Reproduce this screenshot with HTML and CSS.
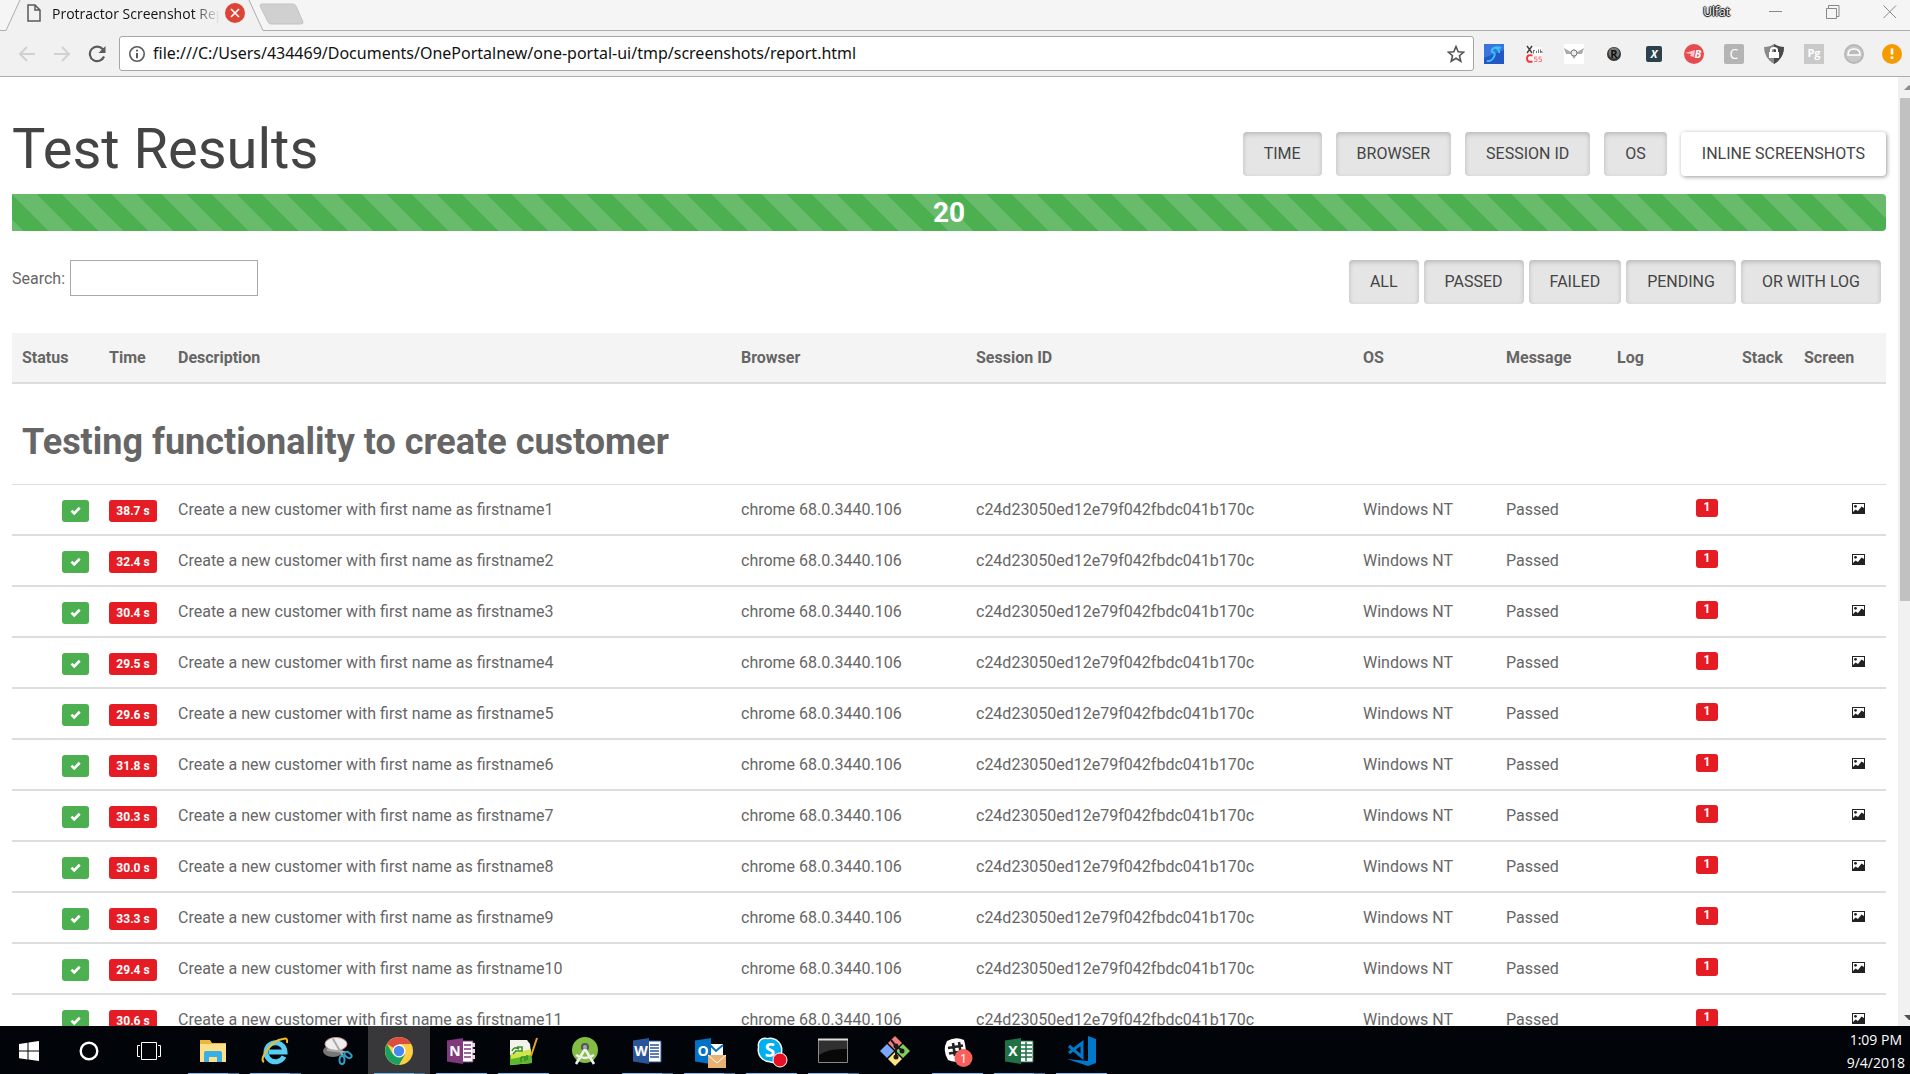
FILE: index.html
```html
<!DOCTYPE html>
<html lang="en">
<head>
<meta charset="utf-8">
<title>Protractor Screenshot Report</title>
<link rel="stylesheet" href="styles.css">
</head>
<body>
<svg class="defs" aria-hidden="true">
  <symbol id="check" viewBox="0 0 12 10"><path d="M1 5.6 2.9 3.7 4.7 5.5 9.3.8 11.2 2.7 4.7 9.2z" fill="#fff"/></symbol>
  <symbol id="picture" viewBox="0 0 13 11"><path d="M0 0h13v11H0z" fill="#222"/><path d="M1 1h11v4L9.500 3.500 6 8 3.500 6.500 1 9z" fill="#fff"/><circle cx="3.500" cy="3.300" r="1.400" fill="#222"/></symbol>
</svg>

<header class="browser">
  <div class="tabstrip">
    <svg class="tabshape" viewBox="0 0 310 31" aria-hidden="true">
      <path d="M0 30.500H6L20 0H249L263 30.500V31H0z" fill="#f1f1f1"/>
      <path d="M0 30.500H6L20 0M249 0L263 30.500H310" fill="none" stroke="#adadad"/>
      <path d="M262 4H293Q295 4 296 6L303 22Q303 24 301 24H271Q269 24 268 22L260 6Q260 4 262 4z" fill="#d0d0d0" stroke="#c3c3c3"/>
    </svg>
    <div class="tab">
      <svg width="14" height="18" viewBox="0 0 14 18"><path d="M1 1H8L13 6V17H1zM8 1V6H13" fill="none" stroke="#5a5a5a" stroke-width="1.500"/></svg>
      <span class="tabtitle">Protractor Screenshot Report</span>
      <button class="plain" aria-label="Close tab"><svg width="20" height="20" viewBox="0 0 20 20"><circle cx="10" cy="10" r="10" fill="#db4437"/><path d="M6 6 14 14M14 6 6 14" stroke="#fff" stroke-width="1.600"/></svg></button>
    </div>
    <div class="winctl">
      <span class="user">Ulfat</span>
      <button class="plain" aria-label="Minimize"><svg width="14" height="14" viewBox="0 0 14 14"><path d="M0 6.500H13" stroke="#888"/></svg></button>
      <button class="plain" aria-label="Restore"><svg width="14" height="14" viewBox="0 0 14 14"><path d="M.5 3.500H10.500V13.500H.5zM2.500 3V.5H13V11.500H11" fill="none" stroke="#888"/></svg></button>
      <button class="plain" aria-label="Close"><svg width="14" height="14" viewBox="0 0 14 14"><path d="M.5.5 13 13M13 .5.5 13" stroke="#888"/></svg></button>
    </div>
  </div>
  <div class="toolbar">
    <div class="nav">
      <button class="plain" aria-label="Back"><svg width="18" height="18" viewBox="0 0 18 18"><path d="M17 9H2M9 2 2 9 9 16" fill="none" stroke="#d0d1d3" stroke-width="2"/></svg></button>
      <button class="plain" aria-label="Forward"><svg width="18" height="18" viewBox="0 0 18 18"><path d="M1 9H16M9 2 16 9 9 16" fill="none" stroke="#d0d1d3" stroke-width="2"/></svg></button>
      <button class="plain" aria-label="Reload"><svg width="18" height="18" viewBox="0 0 18 18"><path d="M14.800 4.200A7.300 7.300 0 1 0 16 11.500" fill="none" stroke="#5a5b5d" stroke-width="2.200"/><path d="M17.500 1V8H10.500z" fill="#5a5b5d"/></svg></button>
    </div>
    <div class="omnibox">
      <svg width="16" height="16" viewBox="0 0 16 16"><circle cx="8" cy="8" r="7.200" fill="none" stroke="#5a5a5a" stroke-width="1.600"/><path d="M7 3.700H9V5.600H7zM7 7H9V12.200H7z" fill="#5a5a5a"/></svg>
      <input class="url" aria-label="Address" value="file:///C:/Users/434469/Documents/OnePortalnew/one-portal-ui/tmp/screenshots/report.html">
      <button class="plain" aria-label="Bookmark"><svg width="18" height="18" viewBox="0 0 18 18"><path d="M9 1.500 11.200 6.700 16.700 7.100 12.500 10.700 13.800 16.200 9 13.200 4.200 16.200 5.500 10.700 1.300 7.100 6.800 6.700z" fill="none" stroke="#555" stroke-width="1.600"/></svg></button>
    </div>
    <div class="extensions">
      <svg viewBox="0 0 20 20"><path d="M0 0h20v20H0z" fill="#2456c4"/><path d="M0 0h20v6L0 14z" fill="#3a74dc"/><path d="M17 4C12 2 7 4 8 8 14 8 9 18 3 17M12 4Q16 6 15 9" fill="none" stroke="#35c4f5" stroke-width="2"/></svg>
      <svg viewBox="0 0 20 20"><path d="M2 3h16v15H2z" fill="#fafafa"/><path d="M3 2 8 9M8 2 3 9" stroke="#444" stroke-width="1.500"/><path d="M9.500 6V9.500M9.500 6.500H11M12.500 7V9M14.500 5.500V9M16.500 5.500V9M16.500 7.500H18V9" fill="none" stroke="#777"/><path d="M8.500 11.500Q3 10 3 14.500T8.500 17.500" fill="none" stroke="#f33" stroke-width="2"/><path d="M13 13H10.500V15H13V17.500H10M17.500 13H15V15H17.500V17.500H14.500" fill="none" stroke="#f77"/></svg>
      <svg viewBox="0 0 20 20"><path d="M0 0h20v20H0z" fill="#fff"/><path d="M0 4 7 8 10 5 13 8 20 4 18 10 13 10 10 15 7 10 2 10z" fill="#aaa"/><circle cx="10" cy="9" r="3" fill="#eee" stroke="#777"/></svg>
      <svg viewBox="0 0 20 20"><circle cx="10" cy="10" r="7" fill="#333"/><circle cx="10" cy="9" r="5.500" fill="#777"/><text x="10" y="14" class="mid k11">R</text></svg>
      <svg viewBox="0 0 20 20"><rect x="2" y="2" width="16" height="16" rx="2" fill="#2c414d"/><text x="10" y="14" class="mid w11i">X</text></svg>
      <svg viewBox="0 0 20 20"><circle cx="10" cy="10" r="10" fill="#e54b4f"/><path d="M1 9 11 6 10 13 6 12 7 10z" fill="#f7c5c6"/><text x="14" y="14" class="mid w11i">B</text></svg>
      <svg viewBox="0 0 20 20"><rect width="20" height="20" rx="2" fill="#b4b4b4"/><text x="10" y="15" class="mid w14">C</text></svg>
      <svg viewBox="0 0 20 20"><path d="M10 0Q14 3 20 3 20 14 10 20 0 14 0 3 6 3 10 0z" fill="#8a8a8a"/><path d="M10 0Q14 3 20 3 20 14 10 20z" fill="#4a4a4a"/><path d="M7 8V6Q7 4 10 4T13 6V8" fill="none" stroke="#fff" stroke-width="2"/><rect x="5" y="8" width="10" height="6" fill="#fff"/></svg>
      <svg viewBox="0 0 20 20"><path d="M0 0h20v20H0z" fill="#c9c9c9"/><text x="10" y="13" class="mid w11">Pg</text></svg>
      <svg viewBox="0 0 20 20"><circle cx="10" cy="10" r="9" fill="#c8c8c8" stroke="#b8b8b8" stroke-width="2"/><path d="M4 11Q4 5 10 5T16 11z" fill="#bbb" stroke="#fff" stroke-width="1.500"/></svg>
    </div>
    <button class="plain menu" aria-label="Menu"><svg width="20" height="20" viewBox="0 0 20 20"><circle cx="10" cy="10" r="10" fill="#f59b00"/><path d="M8.700 4.500h2.600v6H8.700zM8.700 12.500h2.600v2.600H8.700z" fill="#fff"/></svg></button>
  </div>
</header>

<div class="viewport">
  <main class="page">
    <div class="titlebar">
      <h1>Test Results</h1>
      <div class="columns">
        <button class="btn">TIME</button>
        <button class="btn">BROWSER</button>
        <button class="btn">SESSION ID</button>
        <button class="btn">OS</button>
        <button class="btn raised">INLINE SCREENSHOTS</button>
      </div>
    </div>
    <div class="progress">20</div>
    <div class="controls">
      <div class="search">
        <label for="search">Search:</label>
        <input id="search" type="text">
      </div>
      <div class="filters">
        <button class="btn">ALL</button>
        <button class="btn">PASSED</button>
        <button class="btn">FAILED</button>
        <button class="btn">PENDING</button>
        <button class="btn">OR WITH LOG</button>
      </div>
    </div>
    <table class="results">
      <colgroup>
        <col class="c-status"><col class="c-time"><col><col class="c-browser"><col class="c-session"><col class="c-os"><col class="c-message"><col class="c-log"><col class="c-stack"><col class="c-screen">
      </colgroup>
      <thead>
        <tr><th>Status</th><th>Time</th><th>Description</th><th>Browser</th><th>Session ID</th><th>OS</th><th>Message</th><th>Log</th><th>Stack</th><th>Screen</th></tr>
      </thead>
      <tbody>
        <tr class="suite"><td colspan="10"><h2>Testing functionality to create customer</h2></td></tr>
        <tr><td class="right"><span class="ok"><svg><use href="#check"/></svg></span></td><td><span class="time">38.7 s</span></td><td>Create a new customer with first name as firstname1</td><td>chrome 68.0.3440.106</td><td>c24d23050ed12e79f042fbdc041b170c</td><td>Windows NT</td><td>Passed</td><td class="right"><span class="count">1</span></td><td></td><td class="right"><svg class="shot"><use href="#picture"/></svg></td></tr>
        <tr><td class="right"><span class="ok"><svg><use href="#check"/></svg></span></td><td><span class="time">32.4 s</span></td><td>Create a new customer with first name as firstname2</td><td>chrome 68.0.3440.106</td><td>c24d23050ed12e79f042fbdc041b170c</td><td>Windows NT</td><td>Passed</td><td class="right"><span class="count">1</span></td><td></td><td class="right"><svg class="shot"><use href="#picture"/></svg></td></tr>
        <tr><td class="right"><span class="ok"><svg><use href="#check"/></svg></span></td><td><span class="time">30.4 s</span></td><td>Create a new customer with first name as firstname3</td><td>chrome 68.0.3440.106</td><td>c24d23050ed12e79f042fbdc041b170c</td><td>Windows NT</td><td>Passed</td><td class="right"><span class="count">1</span></td><td></td><td class="right"><svg class="shot"><use href="#picture"/></svg></td></tr>
        <tr><td class="right"><span class="ok"><svg><use href="#check"/></svg></span></td><td><span class="time">29.5 s</span></td><td>Create a new customer with first name as firstname4</td><td>chrome 68.0.3440.106</td><td>c24d23050ed12e79f042fbdc041b170c</td><td>Windows NT</td><td>Passed</td><td class="right"><span class="count">1</span></td><td></td><td class="right"><svg class="shot"><use href="#picture"/></svg></td></tr>
        <tr><td class="right"><span class="ok"><svg><use href="#check"/></svg></span></td><td><span class="time">29.6 s</span></td><td>Create a new customer with first name as firstname5</td><td>chrome 68.0.3440.106</td><td>c24d23050ed12e79f042fbdc041b170c</td><td>Windows NT</td><td>Passed</td><td class="right"><span class="count">1</span></td><td></td><td class="right"><svg class="shot"><use href="#picture"/></svg></td></tr>
        <tr><td class="right"><span class="ok"><svg><use href="#check"/></svg></span></td><td><span class="time">31.8 s</span></td><td>Create a new customer with first name as firstname6</td><td>chrome 68.0.3440.106</td><td>c24d23050ed12e79f042fbdc041b170c</td><td>Windows NT</td><td>Passed</td><td class="right"><span class="count">1</span></td><td></td><td class="right"><svg class="shot"><use href="#picture"/></svg></td></tr>
        <tr><td class="right"><span class="ok"><svg><use href="#check"/></svg></span></td><td><span class="time">30.3 s</span></td><td>Create a new customer with first name as firstname7</td><td>chrome 68.0.3440.106</td><td>c24d23050ed12e79f042fbdc041b170c</td><td>Windows NT</td><td>Passed</td><td class="right"><span class="count">1</span></td><td></td><td class="right"><svg class="shot"><use href="#picture"/></svg></td></tr>
        <tr><td class="right"><span class="ok"><svg><use href="#check"/></svg></span></td><td><span class="time">30.0 s</span></td><td>Create a new customer with first name as firstname8</td><td>chrome 68.0.3440.106</td><td>c24d23050ed12e79f042fbdc041b170c</td><td>Windows NT</td><td>Passed</td><td class="right"><span class="count">1</span></td><td></td><td class="right"><svg class="shot"><use href="#picture"/></svg></td></tr>
        <tr><td class="right"><span class="ok"><svg><use href="#check"/></svg></span></td><td><span class="time">33.3 s</span></td><td>Create a new customer with first name as firstname9</td><td>chrome 68.0.3440.106</td><td>c24d23050ed12e79f042fbdc041b170c</td><td>Windows NT</td><td>Passed</td><td class="right"><span class="count">1</span></td><td></td><td class="right"><svg class="shot"><use href="#picture"/></svg></td></tr>
        <tr><td class="right"><span class="ok"><svg><use href="#check"/></svg></span></td><td><span class="time">29.4 s</span></td><td>Create a new customer with first name as firstname10</td><td>chrome 68.0.3440.106</td><td>c24d23050ed12e79f042fbdc041b170c</td><td>Windows NT</td><td>Passed</td><td class="right"><span class="count">1</span></td><td></td><td class="right"><svg class="shot"><use href="#picture"/></svg></td></tr>
        <tr><td class="right"><span class="ok"><svg><use href="#check"/></svg></span></td><td><span class="time">30.6 s</span></td><td>Create a new customer with first name as firstname11</td><td>chrome 68.0.3440.106</td><td>c24d23050ed12e79f042fbdc041b170c</td><td>Windows NT</td><td>Passed</td><td class="right"><span class="count">1</span></td><td></td><td class="right"><svg class="shot"><use href="#picture"/></svg></td></tr>
      </tbody>
    </table>
  </main>
  <div class="scrollbar" aria-hidden="true">
    <svg width="12" height="21" viewBox="0 0 12 21"><path d="M6 13 11 8 12 9V13z" fill="#8d8d8d"/></svg>
    <div class="thumb"></div>
    <svg width="12" height="17" viewBox="0 0 12 17"><path d="M6 6H12V11H11z" fill="#505050"/></svg>
  </div>
</div>

<footer class="taskbar">
  <button class="task sys" aria-label="Start"><svg viewBox="0 0 32 32"><path d="M6 9 14.500 7.700V15.500H6zM15.500 7.500 26 6V15.500H15.500zM6 16.500H14.500V24.500L6 23.300zM15.500 16.500H26V26L15.500 24.600z" fill="#fff"/></svg></button>
  <button class="task sys" aria-label="Cortana"><svg viewBox="0 0 32 32"><circle cx="16" cy="16" r="8.300" fill="none" stroke="#fff" stroke-width="2.400"/></svg></button>
  <button class="task sys" aria-label="Task view"><svg viewBox="0 0 32 32"><path d="M8.500 7.500H23.500V24.500H8.500zM7 10.500H4.500V21.500H7M25 10.500H27.500V21.500H25" fill="none" stroke="#fff"/></svg></button>
  <button class="task open multi" aria-label="File Explorer"><svg viewBox="0 0 32 32"><path d="M3 5H13L15 8H29V26H3z" fill="#e9b93f"/><path d="M3 9H29V27H3z" fill="#ffe08a"/><path d="M7 27V18Q7 16 9 16H23Q25 16 25 18V27H20V22H12V27z" fill="#38b0e3"/></svg></button>
  <button class="task open multi" aria-label="Internet Explorer"><svg viewBox="0 0 32 32"><path d="M25 21.500A9.500 9.500 0 1 1 26 17H10" fill="none" stroke="#58cdf2" stroke-width="5"/><path d="M5 27Q1 25 8 15T24 4Q29 2 28 8" fill="none" stroke="#f3bd23" stroke-width="2"/></svg></button>
  <button class="task" aria-label="Snipping Tool"><svg viewBox="0 0 32 32"><ellipse cx="12" cy="16" rx="10" ry="6" fill="#777"/><ellipse cx="15" cy="9" rx="11" ry="6.500" fill="#eee" stroke="#c99"/><path d="M12 4 22 21M6 15 24 17" stroke="#aaa" stroke-width="2"/><ellipse cx="21" cy="25" rx="2.500" ry="4" fill="none" stroke="#2aa0c8" stroke-width="2"/><ellipse cx="27" cy="20" rx="4" ry="2.500" fill="none" stroke="#2aa0c8" stroke-width="2" transform="rotate(35 27 20)"/></svg></button>
  <button class="task open multi active" aria-label="Chrome"><svg viewBox="0 0 32 32"><circle cx="16" cy="16" r="14" fill="#ffcd42"/><path d="M16 16 4 9A14 14 0 0 1 28.200 9H16z" fill="#dd4c40"/><path d="M4 9A14 14 0 0 0 16 30L22 19.500 10 19.500z" fill="#1aa160"/><circle cx="16" cy="16" r="6.500" fill="#fff"/><circle cx="16" cy="16" r="5.200" fill="#4688f1"/></svg></button>
  <button class="task open" aria-label="OneNote"><svg viewBox="0 0 32 32"><path d="M17 6H28V27H17z" fill="#fff" stroke="#80397b"/><path d="M19 10H26M19 14H26M19 18H26M19 22H26" stroke="#80397b" stroke-width="1.500"/><path d="M27 8h3v4h-3zM27 14h3v4h-3zM27 20h3v4h-3z" fill="#e8d5e7"/><path d="M2 5.500 18 3V29L2 26.500z" fill="#80397b"/><text x="10" y="21" class="mid app">N</text></svg></button>
  <button class="task open" aria-label="Notepad++"><svg viewBox="0 0 32 32"><path d="M3 5H20L23 9 25 28 3 30z" fill="#f2f2e8"/><path d="M3 20 24 16 25 28 3 30z" fill="#5cb72c"/><path d="M4 19 24 14V20L4 24z" fill="#d0e648"/><path d="M5 16Q7 11 12 14M10 12H15V16H8M14 22V27M14 22H18V26M20 20V25M9 16 6 19" fill="none" stroke="#3b8f30" stroke-width="1.600"/><path d="M30 3 24 21" stroke="#e7a235" stroke-width="2"/></svg></button>
  <button class="task" aria-label="Android Studio"><svg viewBox="0 0 32 32"><circle cx="16" cy="15" r="13" fill="#83bd43"/><circle cx="16" cy="12" r="4" fill="#555"/><path d="M16 14 7 29M16 14 25 29M7 20Q16 26 25 20" fill="none" stroke="#f0f0f0" stroke-width="2.600"/><circle cx="16" cy="12" r="2" fill="#9aa"/></svg></button>
  <button class="task open multi" aria-label="Word"><svg viewBox="0 0 32 32"><path d="M17 6H30V27H17z" fill="#fff" stroke="#2a5699"/><path d="M19 10H28M19 13H28M19 16H28M19 19H28M19 22H28" stroke="#2a5699" stroke-width="1.300"/><path d="M2 5.500 18 3V29L2 26.500z" fill="#2a5699"/><text x="10" y="21" class="mid app">W</text></svg></button>
  <button class="task open multi" aria-label="Outlook"><svg viewBox="0 0 32 32"><path d="M17 9H30V21H17z" fill="#fff"/><path d="M17 10 23 16 30 10" fill="none" stroke="#0072c6" stroke-width="2"/><path d="M2 5.500 18 3V29L2 26.500z" fill="#0072c6"/><text x="10" y="21" class="mid app">O</text><path d="M15 20H33V33H15z" fill="#e8b272"/><path d="M15 20 24 28 33 20" fill="none" stroke="#fff"/></svg></button>
  <button class="task open" aria-label="Skype"><svg viewBox="0 0 32 32"><circle cx="10" cy="10" r="7.500" fill="#fff"/><circle cx="19" cy="20" r="8.500" fill="#fff"/><circle cx="15" cy="15" r="12.500" fill="#fff"/><circle cx="10" cy="10" r="6" fill="#00aff0"/><circle cx="19" cy="20" r="7" fill="#00aff0"/><circle cx="15" cy="15" r="11" fill="#00aff0"/><text x="15" y="22" class="mid skype">S</text><circle cx="25" cy="25" r="7" fill="#e81123" stroke="#fff"/></svg></button>
  <button class="task open multi" aria-label="Command Prompt"><svg viewBox="0 0 32 32"><path d="M1.500 4.500H30.500V27.500H1.500z" fill="#080808" stroke="#898989"/><path d="M2 5H30V14Q12 13 2 20z" fill="#303030"/><path d="M1 4.500H31" stroke="#ddd" stroke-width="2"/></svg></button>
  <button class="task" aria-label="Git Bash"><svg viewBox="0 0 32 32"><path d="M16 1 23 8 16 15 9 8z" fill="#f47d7d"/><path d="M24 9 31 16 24 23 17 16z" fill="#80cf5d"/><path d="M8 9 15 16 8 23 1 16z" fill="#79a9f8"/><path d="M16 17 23 24 16 31 9 24z" fill="#ffe37d"/><path d="M12 5 17 11V24M17 11 24 16" fill="none" stroke="#1a1a1a" stroke-width="2"/><g fill="#1a1a1a"><circle cx="17" cy="11" r="2.500"/><circle cx="17" cy="22" r="2.500"/><circle cx="23" cy="16" r="2.500"/></g></svg></button>
  <button class="task open" aria-label="Slack, 1 unread"><svg viewBox="0 0 32 32"><path d="M6 6Q15 1 23 5 26 15 24 24 15 29 7 25 1 15 6 6z" fill="#fff"/><path d="M12 8 14 21M18 7 20 20M7 13 22 10.500M8 18.500 23 16" stroke="#222" stroke-width="2.600"/><circle cx="22.500" cy="23" r="9" fill="#f95f5b"/><text x="22.500" y="27.500" class="mid badge">1</text></svg></button>
  <button class="task open multi" aria-label="Excel"><svg viewBox="0 0 32 32"><path d="M17 6H30V27H17z" fill="#fff" stroke="#207245"/><path d="M18 10H29M18 14H29M18 18H29M18 22H29M23 7V26" stroke="#207245" stroke-width="1.500"/><path d="M2 5.500 18 3V29L2 26.500z" fill="#207245"/><text x="10" y="21" class="mid app">X</text></svg></button>
  <button class="task open" aria-label="Visual Studio Code"><svg viewBox="0 0 32 32"><path d="M23 1 31 4V28L23 31 2 24 23 26z" fill="#0179cb"/><path d="M4 11 17 22V8L4 18" fill="none" stroke="#0179cb" stroke-width="3"/></svg></button>
  <time class="clock">1:09 PM<br>9/4/2018</time>
</footer>
</body>
</html>
```
FILE: styles.css
```css
* { box-sizing: border-box; }

body {
  display: flex;
  flex-direction: column;
  height: 100vh;
  margin: 0;
  overflow: hidden;
  background: #fff;
  color: #666;
  font: 16px/23px Roboto, sans-serif;
}

button, input { font: inherit; }
svg { display: block; flex: none; }
.defs { display: none; }
.plain { padding: 0; border: 0; background: none; }
.mid { text-anchor: middle; }

/* Browser window */
.browser { flex: none; font-family: "Open Sans", sans-serif; color: #111; }
.tabstrip {
  position: relative;
  display: flex;
  justify-content: space-between;
  height: 31px;
  border-bottom: 1px solid #adadad;
  background: #f5f5f5;
}
.tabshape { position: absolute; top: 0; left: 0; width: 310px; height: 31px; }
.tab { position: relative; display: flex; align-items: center; height: 26px; padding-left: 27px; }
.tabtitle {
  width: 168px;
  margin: 0 5px 0 11px;
  overflow: hidden;
  font-size: 14px;
  white-space: nowrap;
  -webkit-mask-image: linear-gradient(90deg, #000 140px, transparent 168px);
  mask-image: linear-gradient(90deg, #000 140px, transparent 168px);
}
.winctl { display: flex; align-items: center; gap: 43px; height: 24px; padding-right: 13px; }
.user {
  margin-right: -4px;
  color: #fff;
  font-size: 12px;
  line-height: 20px;
  text-shadow: 1px 0 1px #000, -1px 0 1px #000, 0 1px 1px #000, 0 -1px 1px #000;
}
.toolbar {
  display: flex;
  align-items: center;
  height: 46px;
  padding: 0 8px 0 18px;
  border-bottom: 1px solid #adadad;
  background: #f1f1f1;
}
.nav { display: flex; gap: 17px; margin-right: 13px; }
.omnibox {
  display: flex;
  flex: 1;
  align-items: center;
  gap: 8px;
  height: 35px;
  margin-right: 10px;
  padding: 0 8px 0 9px;
  border: 1px solid #a6a6a6;
  border-radius: 3px;
  background: #fff;
}
.url { flex: 1; min-width: 0; padding: 0; border: 0; outline: 0; background: none; color: #111; font-family: "Noto Sans", sans-serif; font-size: 16px; }
.extensions { display: flex; gap: 20px; }
.extensions svg { width: 20px; height: 20px; }
.menu { margin-left: 18px; }
.k11 { font-size: 11px; fill: #111; font-weight: 700; }
.w11 { font-size: 11px; fill: #fff; font-weight: 700; }
.w11i { font-size: 11px; fill: #fff; font-weight: 700; font-style: italic; }
.w14 { font-size: 14px; fill: #fff; }

/* Report page */
.viewport { display: flex; flex: 1; min-height: 0; }
.page { flex: 1; min-width: 0; overflow: hidden; padding: 40px 12px 0; }
.titlebar { display: flex; align-items: flex-start; justify-content: space-between; height: 77px; }
h1 { margin: 0; color: #444; font-size: 56px; line-height: 64px; font-weight: 400; }
.columns { display: flex; gap: 14px; padding-top: 15px; }
.filters { display: flex; gap: 5px; padding-right: 5px; }
.btn {
  height: 44px;
  padding: 0 21px 2px;
  border: 0;
  border-radius: 4px;
  background: #e5e5e5;
  box-shadow: inset 0 2px 5px rgba(0, 0, 0, .2);
  color: #444;
  font-size: 16px;
}
.raised { background: #fff; box-shadow: 1px 1px 4px rgba(0, 0, 0, .4); }
.progress {
  height: 37px;
  border-radius: 0 4px 4px 0;
  background: #4caf50 linear-gradient(45deg, rgba(255, 255, 255, .15) 25%, transparent 25%, transparent 50%, rgba(255, 255, 255, .15) 50%, rgba(255, 255, 255, .15) 75%, transparent 75%) 0 0 / 50px 50px;
  color: #fff;
  font-size: 28px;
  line-height: 37px;
  font-weight: 700;
  text-align: center;
}
.controls { display: flex; justify-content: space-between; align-items: flex-start; height: 102px; padding-top: 29px; }
.search { display: flex; align-items: center; gap: 5px; }
.search input { width: 188px; height: 36px; padding: 0 8px; border: 1px solid #a9a9a9; background: #fff; }

.results { width: 100%; table-layout: fixed; border-collapse: separate; border-spacing: 0; }
.c-status { width: 87px; }
.c-time { width: 69px; }
.c-browser { width: 235px; }
.c-session { width: 387px; }
.c-os { width: 143px; }
.c-message { width: 111px; }
.c-log { width: 125px; }
.c-stack { width: 62px; }
.c-screen { width: 92px; }
th, td { height: 51px; padding: 0 10px; border-bottom: 2px solid #ddd; text-align: left; white-space: nowrap; }
th { background: #f4f4f4; }
.suite td { height: 101px; padding-top: 16px; border-bottom-width: 1px; }
h2 { margin: 0; font-size: 36px; line-height: 40px; font-weight: 700; }
.right { text-align: right; }
.ok, .time, .count { display: inline-block; border-radius: 3px; color: #fff; font-size: 12px; font-weight: 700; text-align: center; vertical-align: middle; }
.ok, .time { height: 22px; margin-top: 2px; }
.ok { width: 27px; padding: 6px 7px; background: #4caf50; }
.ok svg { width: 13px; height: 10px; }
.time { width: 48px; background: #e51c23; line-height: 22px; }
.count { width: 22px; height: 18px; margin: 0 4px 4px 0; background: #e51c23; line-height: 16px; }
.shot { width: 13px; height: 11px; margin: 0 11px 2px auto; }

.scrollbar { display: flex; flex: none; flex-direction: column; width: 12px; background: #f1f1f1; }
.thumb { height: 53%; margin: 0 0 auto 2px; background: #c1c1c1; }

/* Taskbar */
.taskbar { display: flex; flex: none; height: 48px; background: #010409; font-family: "Open Sans", sans-serif; }
.task { display: flex; flex: none; align-items: center; justify-content: center; width: 62px; padding: 2px 0 0; border: 0; background: none; }
.task svg { width: 32px; height: 32px; overflow: visible; }
.sys { width: 60px; padding-right: 2px; }
.sys:nth-child(3) { margin-right: 2px; }
.open { background: linear-gradient(#76b9ed, #76b9ed) 50% 100% / 51px 1px no-repeat; }
.multi { background-image: linear-gradient(90deg, #76b9ed 40px, #4c7698 40px); }
.active { background-color: #38383b; }
.app { font-size: 14px; font-weight: 700; fill: #fff; }
.skype { font-size: 19px; font-weight: 700; fill: #fff; }
.badge { font-size: 13px; fill: #fff; }
.clock { margin-left: auto; padding: 2px 5px 0 0; color: #fff; font-size: 14px; line-height: 23px; text-align: center; }
```
